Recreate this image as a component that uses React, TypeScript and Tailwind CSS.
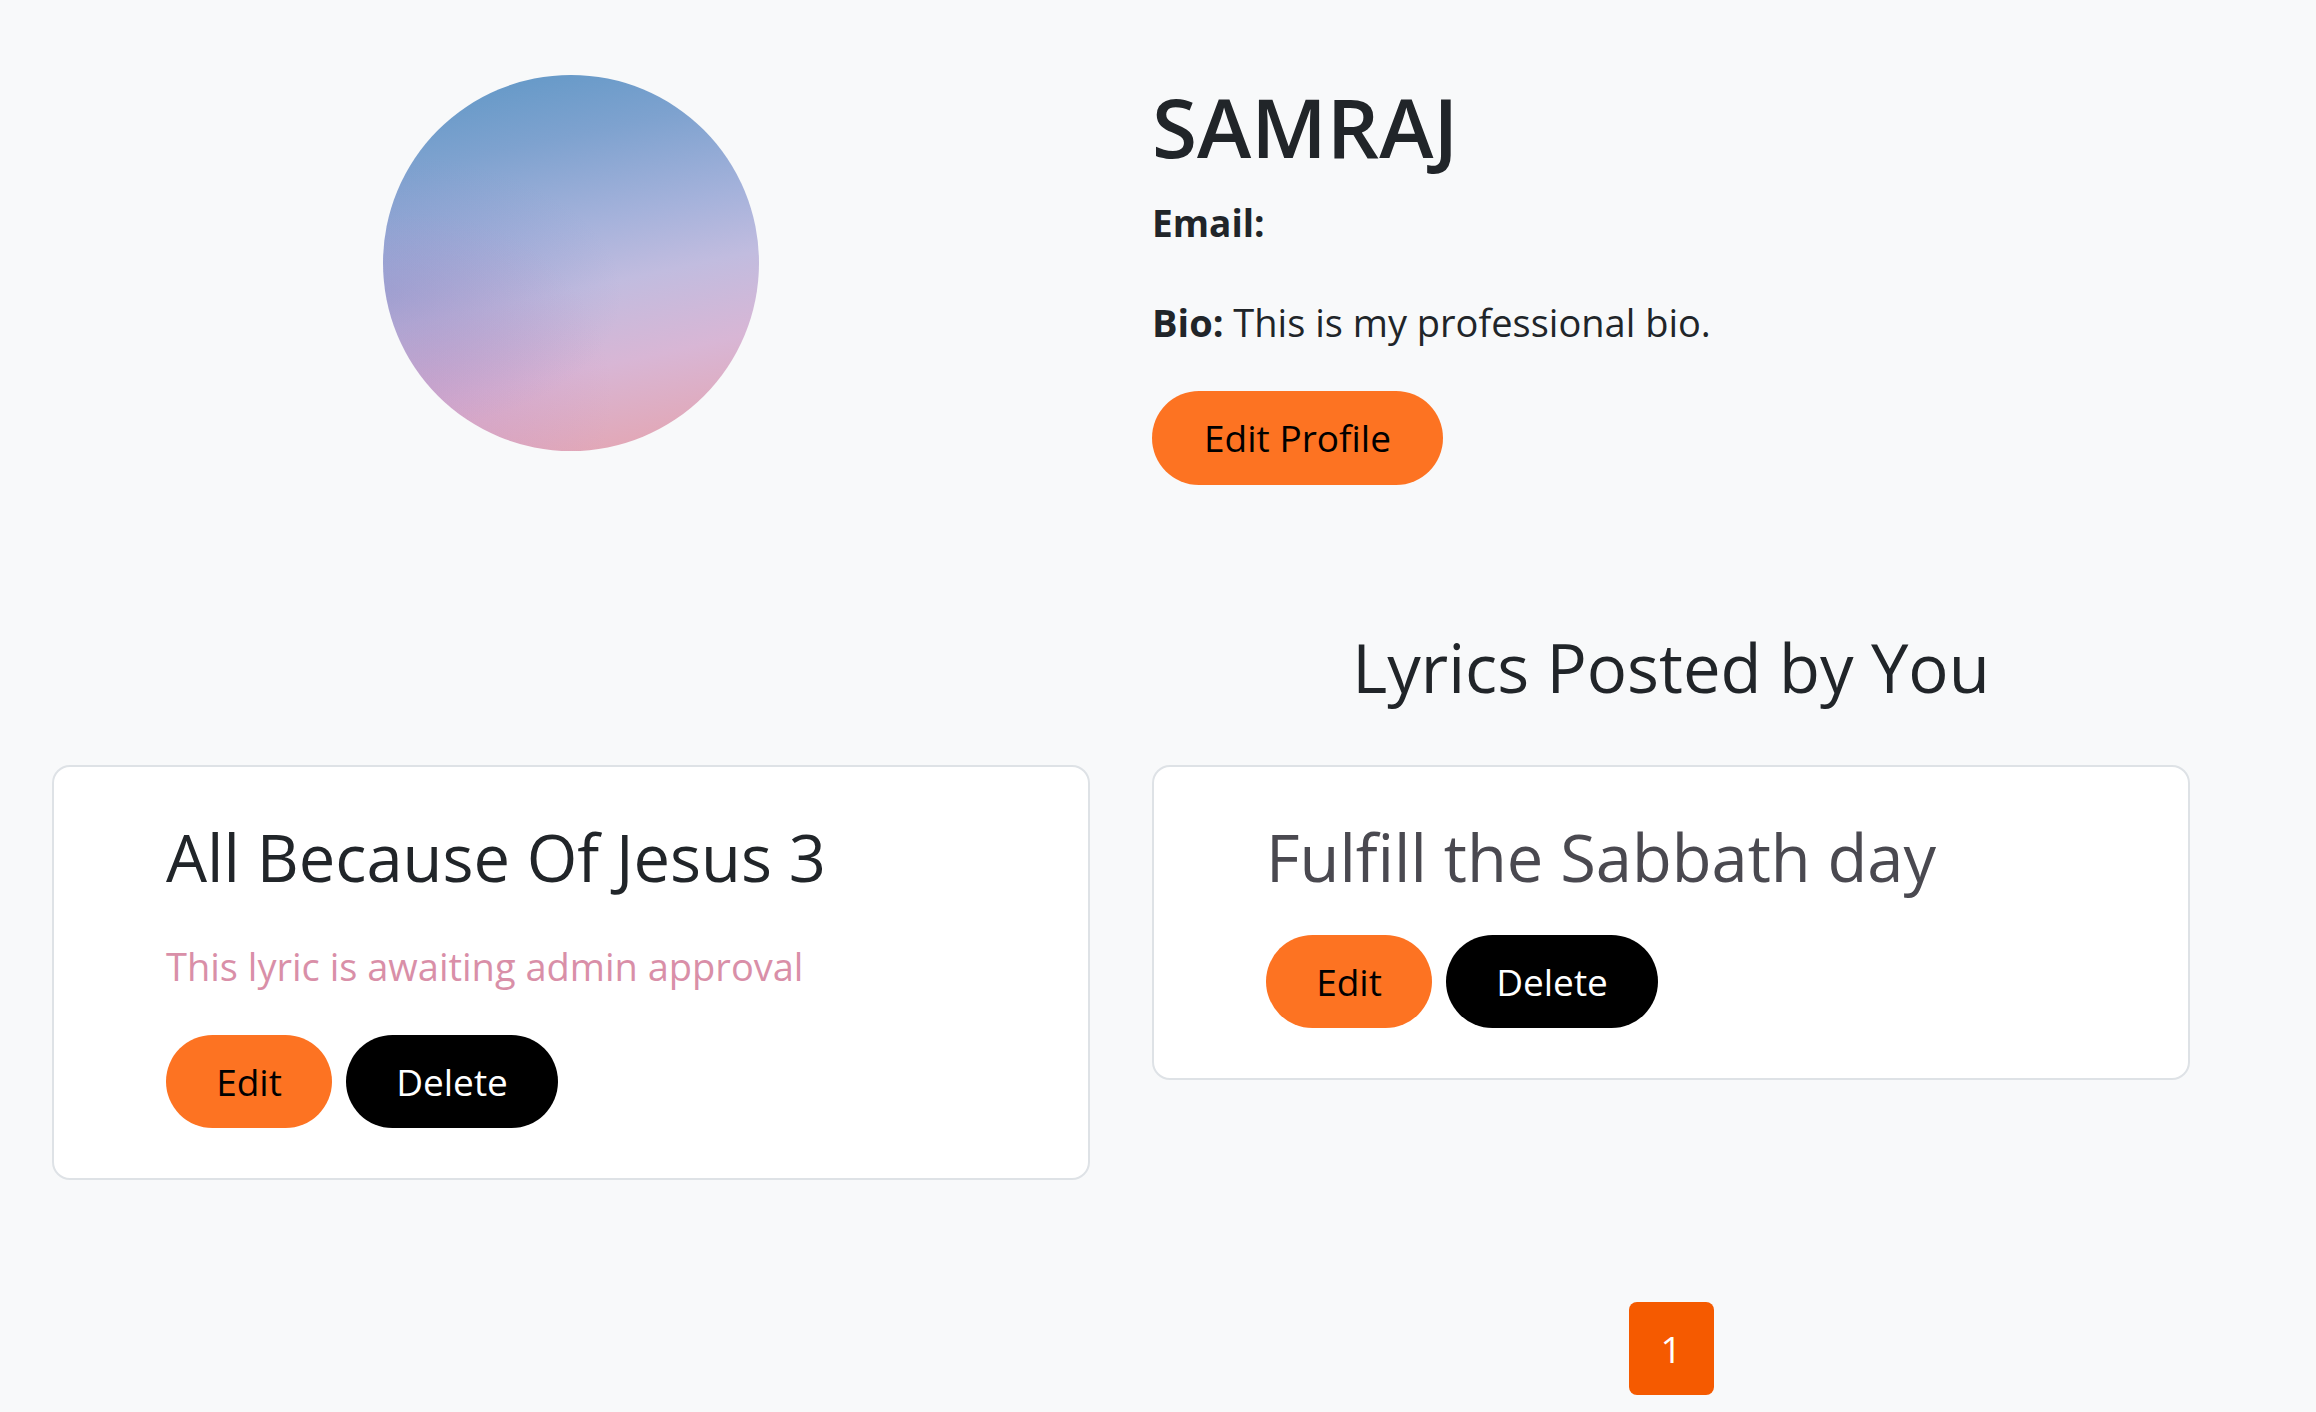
import React from "react";

interface Lyric {
	id: string;
	title: string;
	approved: boolean;
}

const lyrics: Lyric[] = [
	{ id: "1", title: "All Because Of Jesus 3", approved: false },
	{ id: "2", title: "Fulfill the Sabbath day", approved: true },
];

const LyricCard = ({ lyric }: { lyric: Lyric }) => (
	<div className="bg-white border-2 border-[#dee2e6] rounded-[18px] pl-[112px] pr-8 pt-[50px] pb-[50px]">
		<h3
			className={`text-[65px] font-medium leading-[81px] ${lyric.approved ? "text-[#4a4950] mb-[37px]" : "text-[#212529] mb-[40px]"}`}
		>
			{lyric.title}
		</h3>
		{!lyric.approved && (
			<p className="text-[38px] leading-[1.5] text-[#d98fa8] mb-[40px]">
				This lyric is awaiting admin approval
			</p>
		)}
		<div className="flex items-center gap-[14px]">
			<button className="h-[93px] w-[166px] rounded-full bg-[#fd7322] text-black text-[37px]">
				Edit
			</button>
			<button className="h-[93px] w-[212px] rounded-full bg-black text-white text-[37px]">
				Delete
			</button>
		</div>
	</div>
);

export default function App() {
	return (
		<div className="min-h-screen bg-[#f8f9fa] font-['Open_Sans',sans-serif] text-[#212529]">
			<div className="pl-[52px] w-[2190px]">
				<div className="grid grid-cols-2 gap-x-[62px]">
					<div className="flex justify-center pt-[75px]">
						<div className="w-[376px] h-[376px] rounded-full bg-[image:radial-gradient(ellipse_at_0%_58%,rgba(120,130,195,0.35),transparent_45%),radial-gradient(ellipse_at_10%_85%,rgba(200,140,190,0.4),transparent_40%),linear-gradient(168deg,#5c96c5_0%,#7ea2cf_22%,#a5b2db_42%,#c1bcdf_56%,#d8b6d5_74%,#e6a2ab_100%)]" />
					</div>
					<div className="pt-[77px]">
						<h1 className="text-[82px] font-semibold leading-[1.2] mb-[20px]">
							SAMRAJ
						</h1>
						<p className="text-[37px] leading-[1.5] font-bold mb-[44px]">Email:</p>
						<p className="text-[38px] leading-[55px] mb-[41px]">
							<span className="font-bold">Bio:</span> This is my professional bio.
						</p>
						<button className="h-[94px] w-[291px] rounded-full bg-[#fd7322] text-black text-[37px]">
							Edit Profile
						</button>
					</div>
				</div>

				<div className="grid grid-cols-2 gap-x-[62px] mt-[141px] mb-[57px]">
					<div />
					<h2 className="text-center text-[67px] font-medium leading-[82px]">
						Lyrics Posted by You
					</h2>
				</div>

				<div className="grid grid-cols-2 gap-x-[62px] items-start">
					{lyrics.map((lyric) => (
						<LyricCard key={lyric.id} lyric={lyric} />
					))}
				</div>

				<div className="grid grid-cols-2 gap-x-[62px] mt-[122px] pb-8">
					<div />
					<div className="flex justify-center">
						<button className="w-[85px] h-[93px] rounded-[8px] bg-[#f55a00] text-white text-[37px]">
							1
						</button>
					</div>
				</div>
			</div>
		</div>
	);
}
